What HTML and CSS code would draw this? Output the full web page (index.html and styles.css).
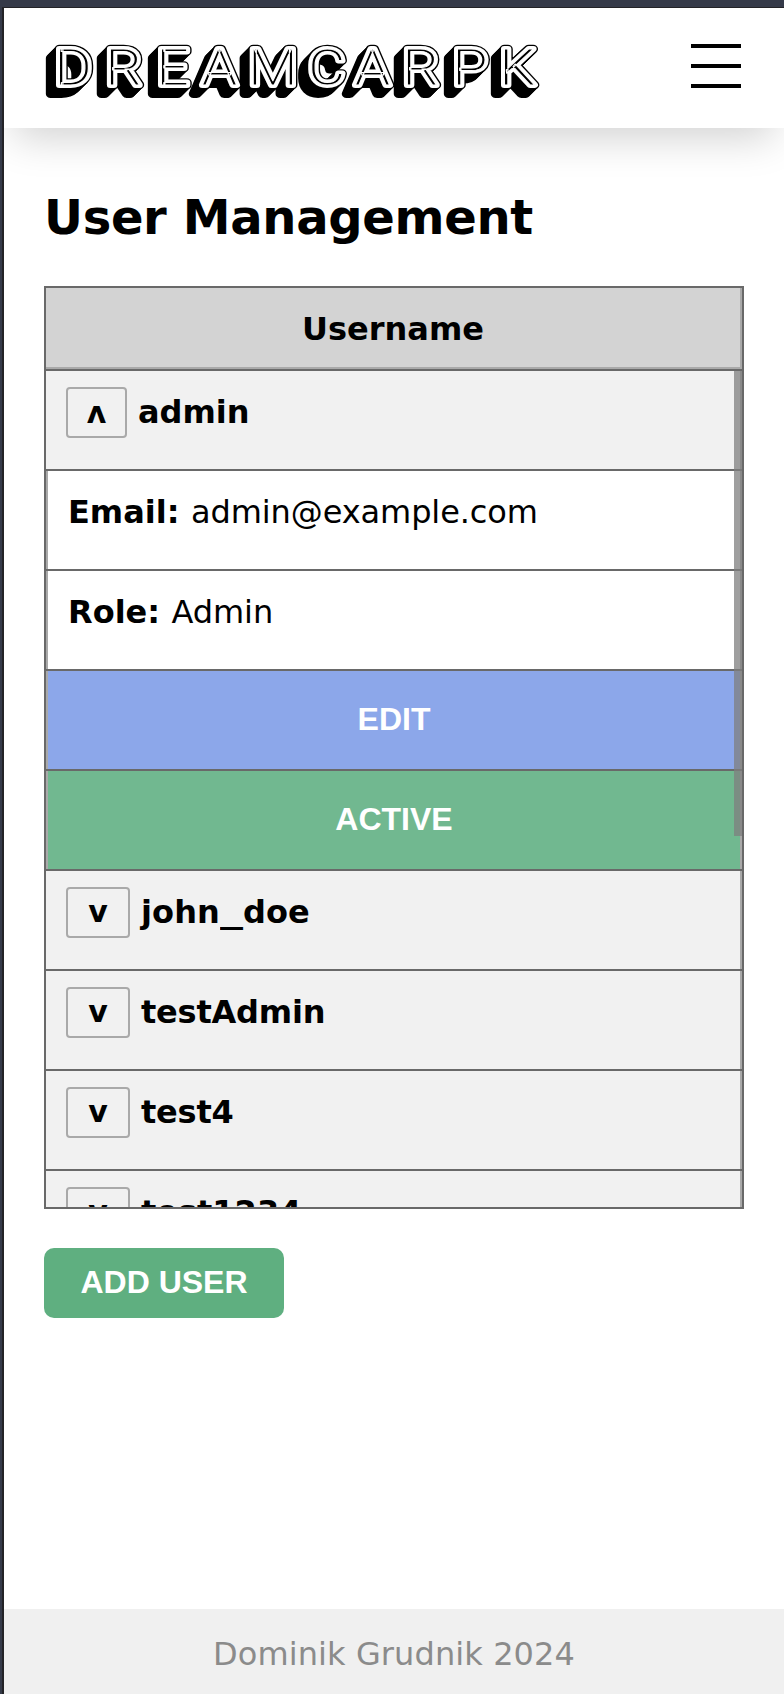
FILE: index.html
```
<!DOCTYPE html>
<html lang="en">
<head>
<meta charset="utf-8">
<title>User Management</title>
<link rel="stylesheet" href="styles.css">
</head>
<body>
<div class="page">
  <header class="header">
    <svg class="logo" width="500" height="60" viewBox="0 0 500 60" role="img" aria-label="DREAMCARPK">
      <defs>
        <text id="word" class="word" y="45" x="9 53.200 97.600 137 177.500 229.500 270 311.500 355 395.800">DREAMCARPK</text>
        <g id="deep3"><use href="#word" x="-.87" y="1"/><use href="#word" x="-1.74" y="2"/><use href="#word" x="-2.61" y="3"/></g>
      </defs>
      <g transform="scale(1.15 1)">
        <g class="deep"><use href="#deep3"/><use href="#deep3" x="-2.61" y="3"/><use href="#deep3" x="-5.22" y="6"/></g>
        <use class="edge" href="#word"/>
        <use class="face" href="#word"/>
        <use class="inline" href="#word"/>
      </g>
    </svg>
    <button class="menu" aria-label="Menu"><span></span><span></span><span></span></button>
  </header>
  <main class="main">
    <h1 class="title">User Management</h1>
    <section class="table">
      <div class="head">Username</div>
      <div class="rows">
        <div class="row user"><button class="toggle open">ʌ</button><b class="name">admin</b></div>
        <div class="row detail"><b class="email">Email:</b><span class="value">admin@example.com</span></div>
        <div class="row detail"><b class="role">Role:</b><span class="value">Admin</span></div>
        <div class="row detail action edit">EDIT</div>
        <div class="row detail action active">ACTIVE</div>
        <div class="row user"><button class="toggle">v</button><b class="name loose">john<span class="underscore">_</span>doe</b></div>
        <div class="row user"><button class="toggle">v</button><b class="name tight">testAdmin</b></div>
        <div class="row user"><button class="toggle">v</button><b class="name tight">test4</b></div>
        <div class="row user"><button class="toggle">v</button><b class="name">test1234</b></div>
        <div class="thumb"></div>
      </div>
    </section>
    <button class="add">ADD USER</button>
  </main>
  <footer class="footer">Dominik Grudnik 2024</footer>
</div>
</body>
</html>
```
FILE: styles.css
```
* { box-sizing: border-box; }
body {
  margin: 0;
  height: 1694px;
  padding: 7px 0 0 2px;
  overflow: hidden;
  background: #353a49;
  font: 32px/40px Verdana, "DejaVu Sans", sans-serif;
  color: #000;
}
button { font: inherit; color: inherit; padding: 0; border: 0; background: none; }
.page {
  height: 1687px;
  display: flex;
  flex-direction: column;
  overflow: hidden;
  background: #fff;
  border-top: 1px solid #232327;
  border-left: 2px solid #232327;
}
.header {
  flex: none;
  height: 120px;
  display: flex;
  justify-content: space-between;
  padding: 32px 43px 0 40px;
  background: #fff;
  box-shadow: 0 20px 40px -10px rgba(0, 0, 0, .18);
}
.logo { overflow: visible; }
.word { font-family: Roboto, sans-serif; font-weight: 300; font-size: 50px; stroke-linejoin: round; }
.deep { fill: #000; stroke: #000; stroke-width: 8px; }
.edge { fill: #000; stroke: #000; stroke-width: 8.5px; }
.face { fill: #fff; stroke: #fff; stroke-width: 6px; stroke-linejoin: miter; stroke-miterlimit: 2; }
.inline { fill: #000; stroke: #fff; stroke-width: 1px; }
.menu { height: 44px; width: 50px; margin-top: 4px; display: flex; flex-direction: column; justify-content: space-between; }
.menu span { height: 4px; background: #000; }
.main { flex: 1; padding: 59px 40px 0; }
.title { margin: 0 0 39px; font-size: 48px; line-height: 60px; letter-spacing: -.33px; }
.table { height: 923px; border: 2px solid #696969; display: flex; flex-direction: column; }
.head {
  flex: none;
  height: 81px;
  padding-top: 21px;
  text-align: center;
  font-weight: bold;
  background: #d3d3d3;
  border-right: 2px solid #a9a9a9;
  border-bottom: 2px solid #a9a9a9;
}
.rows { position: relative; flex: 1; min-height: 0; overflow: hidden; }
.row {
  height: 100px;
  display: flex;
  align-items: flex-start;
  padding: 21px 20px 0;
  border-top: 2px solid #696969;
  box-shadow: inset -2px 0 #a9a9a9;
}
.user { background: #f1f1f1; padding-top: 16px; }
.detail { box-shadow: inset 2px 0 #a9a9a9, inset -2px 0 #a9a9a9; padding-left: 22px; }
.toggle {
  width: 64px;
  height: 51px;
  padding-bottom: 2px;
  border: 2px solid #a9a9a9;
  border-radius: 4px;
  font-weight: bold;
  font-size: 30px;
}
.open { width: 61px; padding-bottom: 0; }
.name { margin: 5px 0 0 11px; }
.loose { letter-spacing: .1px; }
.underscore { display: inline-block; width: 23px; transform: scaleX(1.44); transform-origin: 0 0; line-height: 36px; height: 36px; vertical-align: 1px; }
.tight { letter-spacing: -.2px; }
.value { margin-left: 11.5px; letter-spacing: -.1px; }
.action { justify-content: center; padding: 28px 0 0; color: #fff; font: bold 32px/40px "Liberation Sans", Arial, sans-serif; }
.edit { background: #8ca7ea; }
.active { background: #71b890; }
.thumb { position: absolute; top: 2px; right: 0; width: 8px; height: 465px; background: rgba(127, 127, 127, .75); }
.add {
  display: block;
  width: 240px;
  height: 70px;
  margin-top: 39px;
  padding-bottom: 2px;
  border-radius: 10px;
  background: #5faf80;
  color: #fff;
  font: bold 32px/40px "Liberation Sans", Arial, sans-serif;
}
.footer { flex: none; height: 85px; padding-top: 25px; text-align: center; letter-spacing: .1px; background: #f0f0f0; color: #8b8b8b; }
```
